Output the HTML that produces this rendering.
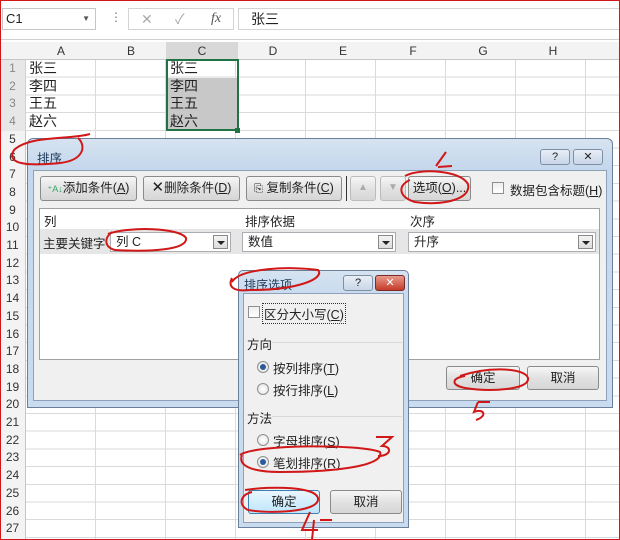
<!DOCTYPE html>
<html><head><meta charset="utf-8"><style>
*{box-sizing:border-box;margin:0;padding:0}
body{width:620px;height:540px;overflow:hidden;background:#fff;font-family:"Liberation Sans","Noto Sans CJK SC",sans-serif;font-size:13px;color:#222;position:relative}
.a{position:absolute}
.btn{position:absolute;border:1px solid #8a8a8a;border-radius:3px;background:linear-gradient(#f6f6f6,#e2e2e2 50%,#d6d6d6);font-size:12.5px;text-align:center;line-height:22px;color:#222}
.dd{position:absolute;border:1px solid #abadb3;background:#fff;height:20px;font-size:12.5px;line-height:18px;padding-left:5px}
.dd i{position:absolute;right:2px;top:2px;width:15px;height:14px;border:1px solid #888;background:linear-gradient(#f4f4f4,#dcdcdc)}
.dd i:after{content:"";position:absolute;left:3px;top:5px;border:4px solid transparent;border-top:4px solid #222;border-bottom:0}
.rad{position:absolute;width:12px;height:12px;border-radius:50%;border:1px solid #8e8f8f;background:radial-gradient(#fff,#e0e0e0)}
.rad.on:after{content:"";position:absolute;left:2px;top:2px;width:6px;height:6px;border-radius:50%;background:#2a5a9a}
.cb{position:absolute;width:12px;height:12px;border:1px solid #8e8f8f;background:linear-gradient(#eee,#fff)}
</style></head><body>
<!-- formula bar -->
<div class="a" style="left:0;top:0;width:620px;height:40px;background:#fff;border-bottom:1px solid #d0d0d0"></div>
<div class="a" style="left:2px;top:8px;width:94px;height:22px;border:1px solid #c6c6c6;font-size:13px;line-height:20px;padding-left:3px">C1<span style="position:absolute;right:5px;top:0;font-size:8px;color:#555">▼</span></div>
<div class="a" style="left:110px;top:10px;color:#777;font-size:12px">⋮</div>
<div class="a" style="left:128px;top:8px;width:106px;height:22px;border:1px solid #d4d4d4;color:#aaa;font-size:14px;line-height:20px"><span style="position:absolute;left:12px">✕</span><span style="position:absolute;left:46px">✓</span><span style="position:absolute;left:82px;color:#555;font-style:italic;font-family:'Liberation Serif',serif">fx</span></div>
<div class="a" style="left:238px;top:8px;width:382px;height:22px;border:1px solid #d4d4d4;line-height:20px;padding-left:12px;font-size:14px">张三</div>
<!-- grid -->
<div class="a" style="left:26px;top:60px;width:594px;height:480px;background-image:repeating-linear-gradient(to bottom,transparent 0,transparent 16.7px,#dadada 16.7px,#dadada 17.7px),repeating-linear-gradient(to right,transparent 0,transparent 69px,#dadada 69px,#dadada 70px)"></div>
<div class="a" style="left:0;top:42px;width:620px;height:18px;background:#f3f3f3;border-bottom:1px solid #c6c6c6;font-size:12px;line-height:18px;color:#333">
<span class="a" style="left:26px;width:70px;text-align:center">A</span><span class="a" style="left:96px;width:70px;text-align:center">B</span><span class="a" style="left:166px;width:72px;text-align:center;background:#d8d8d8">C</span><span class="a" style="left:238px;width:70px;text-align:center">D</span><span class="a" style="left:308px;width:70px;text-align:center">E</span><span class="a" style="left:378px;width:70px;text-align:center">F</span><span class="a" style="left:448px;width:70px;text-align:center">G</span><span class="a" style="left:518px;width:70px;text-align:center">H</span></div>
<div class="a" style="left:0;top:60px;width:26px;height:480px;background:#f3f3f3;border-right:1px solid #c6c6c6;font-size:12px;color:#333;line-height:17.7px;text-align:center" id="rn">1<br>2<br>3<br>4<br>5<br>6<br>7<br>8<br>9<br>10<br>11<br>12<br>13<br>14<br>15<br>16<br>17<br>18<br>19<br>20<br>21<br>22<br>23<br>24<br>25<br>26<br>27</div>
<div class="a" style="left:0;top:60px;width:26px;height:71px;background:#dcdcdc;opacity:.5"></div>
<div class="a" style="left:29px;top:60px;font-size:14px;line-height:17.7px">张三<br>李四<br>王五<br>赵六</div>
<div class="a" style="left:167px;top:78px;width:70px;height:53px;background:#c8c8c8"></div>
<div class="a" style="left:166px;top:59px;width:73px;height:72px;border:2px solid #217346"></div>
<div class="a" style="left:235px;top:128px;width:5px;height:5px;background:#217346"></div>
<div class="a" style="left:170px;top:60px;font-size:14px;line-height:17.7px">张三<br>李四<br>王五<br>赵六</div>
<!-- main dialog -->
<div class="a" style="left:27px;top:138px;width:586px;height:270px;border:1px solid #6b7f98;border-radius:6px 6px 0 0;background:linear-gradient(#d6e3f1,#c5d7ec 30px,#c9dbee)"></div>
<div class="a" style="left:37px;top:148px;font-size:12.5px;color:#1e3a5a">排序</div>
<div class="btn" style="left:540px;top:149px;width:30px;height:16px;line-height:14px;font-size:11px;border-color:#7d8ea5;background:linear-gradient(#e8eef6,#c8d6e8)">?</div>
<div class="btn" style="left:573px;top:149px;width:30px;height:16px;line-height:14px;font-size:11px;border-color:#7d8ea5;background:linear-gradient(#e8eef6,#c8d6e8)">✕</div>
<div class="a" style="left:33px;top:170px;width:574px;height:231px;background:#f0f0f0;border:1px solid #8ea1b8"></div>
<div class="btn" style="left:40px;top:176px;width:97px;height:25px"><span style="font-size:9px;color:#3a6">⁺A↓</span>添加条件(<u>A</u>)</div>
<div class="btn" style="left:143px;top:176px;width:97px;height:25px"><span style="font-size:15px">✕</span>删除条件(<u>D</u>)</div>
<div class="btn" style="left:246px;top:176px;width:96px;height:25px"><span style="font-size:11px">⎘</span> 复制条件(<u>C</u>)</div>
<div class="a" style="left:346px;top:176px;width:1px;height:25px;background:#333"></div>
<div class="btn" style="left:350px;top:176px;width:26px;height:25px;color:#aaa;font-size:10px;border-color:#bbb">▲</div>
<div class="btn" style="left:380px;top:176px;width:26px;height:25px;color:#aaa;font-size:10px;border-color:#bbb">▼</div>
<div class="btn" style="left:408px;top:176px;width:63px;height:25px">选项(<u>O</u>)...</div>
<div class="cb" style="left:492px;top:182px"></div>
<div class="a" style="left:510px;top:180px;font-size:12.5px">数据包含标题(<u>H</u>)</div>
<div class="a" style="left:39px;top:208px;width:561px;height:152px;background:#fff;border:1px solid #a0a0a0"></div>
<div class="a" style="left:44px;top:211px;font-size:12.5px">列</div>
<div class="a" style="left:245px;top:211px;font-size:12.5px">排序依据</div>
<div class="a" style="left:410px;top:211px;font-size:12.5px">次序</div>
<div class="a" style="left:40px;top:229px;width:559px;height:25px;background:#e6e6e6"></div>
<div class="a" style="left:43px;top:233px;font-size:12.5px">主要关键字</div>
<div class="dd" style="left:110px;top:232px;width:121px">列 C<i></i></div>
<div class="dd" style="left:242px;top:232px;width:154px">数值<i></i></div>
<div class="dd" style="left:408px;top:232px;width:188px">升序<i></i></div>
<div class="btn" style="left:446px;top:366px;width:74px;height:24px">确定</div>
<div class="btn" style="left:527px;top:366px;width:72px;height:24px">取消</div>
<!-- sub dialog -->
<div class="a" style="left:238px;top:270px;width:171px;height:258px;border:1px solid #6b7f98;border-radius:5px 5px 0 0;background:linear-gradient(#d6e3f1,#c9dbee 22px,#c9dbee)"></div>
<div class="a" style="left:244px;top:276px;font-size:12px;color:#1e3a5a">排序选项</div>
<div class="btn" style="left:343px;top:275px;width:30px;height:16px;line-height:14px;font-size:11px;border-color:#7d8ea5;background:linear-gradient(#e8eef6,#c8d6e8)">?</div>
<div class="btn" style="left:375px;top:275px;width:30px;height:16px;line-height:14px;font-size:11px;color:#fff;border-color:#7a2a2a;background:linear-gradient(#e89a8a,#c53a2a)">✕</div>
<div class="a" style="left:243px;top:293px;width:161px;height:230px;background:#f0f0f0;border:1px solid #8ea1b8"></div>
<div class="cb" style="left:248px;top:306px"></div>
<div class="a" style="left:262px;top:303px;font-size:12.5px;border:1px dotted #333;padding:0 1px">区分大小写(<u>C</u>)</div>
<div class="a" style="left:247px;top:334px;font-size:12.5px">方向</div>
<div class="a" style="left:272px;top:342px;width:130px;height:1px;background:#d8d8d8"></div>
<div class="rad on" style="left:257px;top:361px"></div>
<div class="a" style="left:273px;top:358px;font-size:12.5px">按列排序(<u>T</u>)</div>
<div class="rad" style="left:257px;top:383px"></div>
<div class="a" style="left:273px;top:380px;font-size:12.5px">按行排序(<u>L</u>)</div>
<div class="a" style="left:247px;top:408px;font-size:12.5px">方法</div>
<div class="a" style="left:272px;top:416px;width:130px;height:1px;background:#d8d8d8"></div>
<div class="rad" style="left:257px;top:434px"></div>
<div class="a" style="left:273px;top:431px;font-size:12.5px">字母排序(<u>S</u>)</div>
<div class="rad on" style="left:257px;top:456px"></div>
<div class="a" style="left:273px;top:453px;font-size:12.5px">笔划排序(<u>R</u>)</div>
<div class="btn" style="left:248px;top:490px;width:72px;height:24px;border-color:#3c7fb1;background:linear-gradient(#eaf6fd,#bee6fd)">确定</div>
<div class="btn" style="left:330px;top:490px;width:72px;height:24px">取消</div>
<!-- red annotations -->
<svg class="a" style="left:0;top:0" width="620" height="540" fill="none" stroke="#d01818" stroke-width="2">
<rect x="0.5" y="0.5" width="619" height="539" stroke-width="1"/>
<path d="M90 134 C70 140 30 135 14 150 C5 165 30 166 60 163 C85 160 86 145 78 138"/>
<path d="M405 176 C420 168 460 170 468 184 C472 200 440 206 415 202 C400 198 396 186 410 180"/>
<path d="M436 166 L446 152 M438 167 L452 166"/>
<path d="M108 234 C130 226 180 228 186 238 C188 250 150 252 115 250 C104 247 104 238 112 232"/>
<path d="M232 282 C240 268 290 266 318 270 C325 278 300 290 250 290 C232 292 228 286 232 278"/>
<path d="M240 455 C255 444 360 444 380 452 C385 465 340 472 280 472 C250 472 238 465 242 455"/>
<path d="M376 437 L392 437 L382 446 C392 446 392 456 378 456"/>
<path d="M245 490 C270 486 320 486 318 500 C316 512 270 514 248 510 C238 505 240 495 252 492"/>
<path d="M310 512 L302 530 L318 530 M314 520 L312 540 M320 520 L332 520"/>
<path d="M460 376 C490 366 525 368 528 378 C530 390 490 392 465 388 C450 385 452 378 465 376"/>
<path d="M478 402 L474 412 C484 408 488 416 476 420 M478 402 L490 402"/>
</svg>
</body></html>
